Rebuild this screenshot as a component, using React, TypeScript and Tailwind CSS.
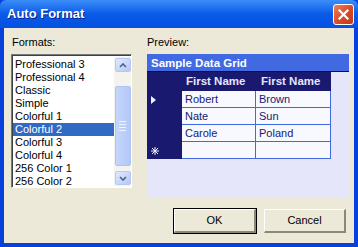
const formats = [
  'Professional 3',
  'Professional 4',
  'Classic',
  'Simple',
  'Colorful 1',
  'Colorful 2',
  'Colorful 3',
  'Colorful 4',
  '256 Color 1',
  '256 Color 2',
];

const rows = [
  ['Robert', 'Brown'],
  ['Nate', 'Sun'],
  ['Carole', 'Poland'],
  ['', ''],
];

function ScrollButton({ dir }: { dir: 'up' | 'down' }) {
  return (
    <div className="h-[15px] w-[16px] mx-auto rounded-[2px] border border-[#b7c8f4] bg-gradient-to-br from-[#e1eafe] to-[#b4c8f6] flex items-center justify-center">
      <svg width="8" height="5" viewBox="0 0 8 5">
        {dir === 'up' ? (
          <path d="M1 4 L4 1 L7 4" fill="none" stroke="#4d6185" strokeWidth="1.6" />
        ) : (
          <path d="M1 1 L4 4 L7 1" fill="none" stroke="#4d6185" strokeWidth="1.6" />
        )}
      </svg>
    </div>
  );
}

function XpButton({ label, isDefault }: { label: string; isDefault?: boolean }) {
  return (
    <div
      className={
        'w-[84px] h-[26px] ' +
        (isDefault ? 'border border-black' : 'border border-transparent')
      }
    >
      <div className="h-full w-full border-t border-l border-white border-b-2 border-r-2 border-b-[#8a887c] border-r-[#8a887c] bg-[#ece9d8] flex items-center justify-center text-[11px] text-black">
        {label}
      </div>
    </div>
  );
}

export default function App() {
  return (
    <div
      className="w-[358px] h-[247px] flex flex-col bg-[#0840dc] select-none"
      style={{ fontFamily: 'Tahoma, "Liberation Sans", Arial, sans-serif' }}
    >
      {/* title bar */}
      <div className="h-[28px] shrink-0 flex items-center justify-between pl-[7px] pr-[4px] bg-gradient-to-b from-[#3b8df8] via-[#0a5ae8] to-[#0550e0] rounded-t-[6px]">
        <span
          className="text-white font-bold text-[13px] [text-shadow:1px_1px_0_#0a1e8a]"
          style={{ fontFamily: '"Liberation Sans", Arial, sans-serif' }}
        >
          Auto Format
        </span>
        <div className="w-[21px] h-[21px] rounded-[3px] border border-white bg-gradient-to-br from-[#e9805f] via-[#dd4b27] to-[#c23a16] flex items-center justify-center">
          <svg width="11" height="11" viewBox="0 0 11 11">
            <path d="M1.5 1.5 L9.5 9.5 M9.5 1.5 L1.5 9.5" stroke="white" strokeWidth="2.2" strokeLinecap="square" />
          </svg>
        </div>
      </div>

      {/* body */}
      <div className="flex-1 mx-[4px] mb-[4px] bg-[#ece9d8] flex flex-col pt-[8px] pl-[7px] pr-[5px]">
        <div className="flex gap-[15px]">
          {/* formats list */}
          <div className="w-[121px] flex flex-col">
            <div className="h-[13px] leading-[13px] text-[11px] text-black pl-[1px] mb-[5px]">Formats:</div>
            <div className="h-[134px] flex border border-t-[#7a7a7a] border-l-[#7a7a7a] border-b-white border-r-white shadow-[inset_1px_1px_0_#404040] bg-white pt-[2px] pl-[1px] pb-[1px]">
              <div className="flex-1 pt-[1px]">
                {formats.map((f) => (
                  <div
                    key={f}
                    className={
                      'h-[13px] leading-[13px] text-[11px] pl-[2px] whitespace-nowrap ' +
                      (f === 'Colorful 2' ? 'bg-[#316ac5] text-white' : 'text-black')
                    }
                  >
                    {f}
                  </div>
                ))}
              </div>
              <div className="w-[17px] bg-[#f4f3ee] flex flex-col pt-[1px] pb-[1px]">
                <ScrollButton dir="up" />
                <div className="flex-1 pt-[14px] pb-[5px]">
                  <div className="h-[80px] w-[16px] mx-auto rounded-[2px] border border-[#b0c4f4] bg-gradient-to-r from-[#c6d6fc] to-[#b4c7f7] flex flex-col items-center justify-center gap-[2px]">
                    <div className="w-[7px] h-[1px] bg-[#eef3fe]" />
                    <div className="w-[7px] h-[1px] bg-[#eef3fe]" />
                    <div className="w-[7px] h-[1px] bg-[#eef3fe]" />
                    <div className="w-[7px] h-[1px] bg-[#eef3fe]" />
                  </div>
                </div>
                <ScrollButton dir="down" />
              </div>
            </div>
          </div>

          {/* preview */}
          <div className="w-[202px] flex flex-col">
            <div className="h-[13px] leading-[13px] text-[11px] text-black mb-[5px]">Preview:</div>
            <div className="h-[143px] bg-[#e6e6fa] flex flex-col">
              <div className="h-[18px] bg-[#4169e1] text-white font-bold text-[11.5px] leading-[18px] pl-[4px] border-b border-[#101030]">
                Sample Data Grid
              </div>
              <div className="w-[184px] flex flex-col">
                <div className="h-[19px] flex bg-[#191970] text-[#e6e6fa] font-bold text-[11.5px]">
                  <div className="w-[35px]" />
                  <div className="w-[74px] pl-[4px] leading-[19px]">First Name</div>
                  <div className="w-[75px] pl-[5px] leading-[19px]">First Name</div>
                </div>
                {rows.map((r, i) => (
                  <div key={i} className="h-[17px] flex text-[11px] text-[#191970]">
                    <div className="w-[35px] bg-[#191970] flex items-center pl-[4px]">
                      {i === 0 && (
                        <svg width="5" height="8" viewBox="0 0 5 8">
                          <path d="M0 0 L5 4 L0 8 Z" fill="#f0f0ff" />
                        </svg>
                      )}
                      {i === 3 && (
                        <svg width="8" height="8" viewBox="0 0 8 8">
                          <path d="M4 0 V8 M0 4 H8 M1 1 L7 7 M7 1 L1 7" stroke="#f0f0ff" strokeWidth="1" />
                        </svg>
                      )}
                    </div>
                    <div className="w-[74px] bg-[#f8f8ff] border-b border-r border-[#4169e1] pl-[3px] leading-[16px]">
                      {r[0]}
                    </div>
                    <div className="w-[75px] bg-[#f8f8ff] border-b border-r border-[#4169e1] pl-[3px] leading-[16px]">
                      {r[1]}
                    </div>
                  </div>
                ))}
              </div>
            </div>
          </div>
        </div>

        {/* buttons */}
        <div className="mt-[11px] flex justify-end gap-[6px] pr-[2px]">
          <XpButton label="OK" isDefault />
          <XpButton label="Cancel" />
        </div>
      </div>
    </div>
  );
}
